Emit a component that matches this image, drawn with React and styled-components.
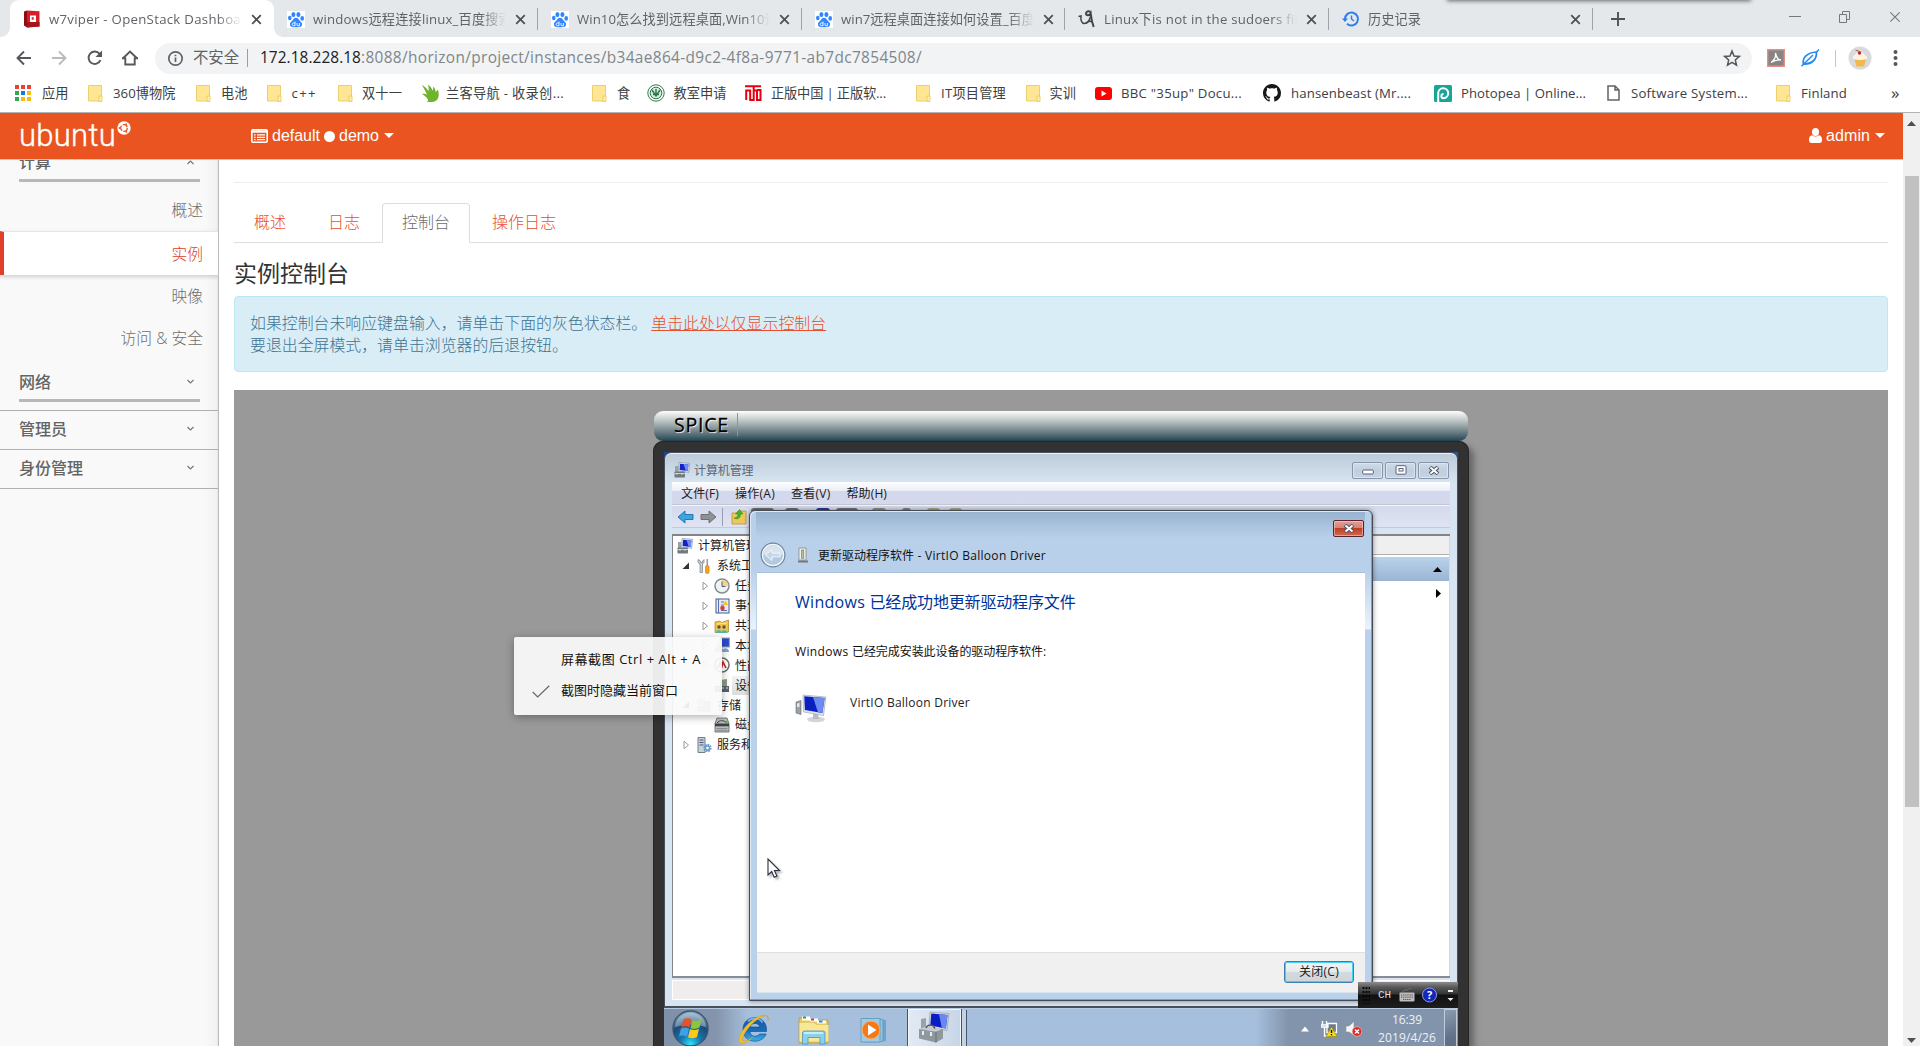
import React, { useLayoutEffect, useRef, useState } from "react";
import styled, { createGlobalStyle, css } from "styled-components";

const UI = `"Open Sans", "Noto Sans CJK SC", sans-serif`;
const ARIAL = `"Liberation Sans", "Noto Sans CJK SC", sans-serif`;

const Global = createGlobalStyle`
  * { box-sizing: border-box; }
  body { margin: 0; background: #fff; font-family: ${UI}; overflow: hidden; }
  svg { display: block; flex: none; }
`;

/* Text tracked so that it fills a given width. */
const FitSpan = styled.span`
  display: inline-block;
  white-space: pre;
`;
function Fit({ w, children }) {
  const ref = useRef(null);
  const [spacing, setSpacing] = useState(0);
  useLayoutEffect(() => {
    const natural = ref.current.getBoundingClientRect().width;
    setSpacing((w - natural) / String(children).length);
  }, [w, children]);
  return (
    <FitSpan ref={ref} style={{ letterSpacing: `${spacing}px` }}>
      {children}
    </FitSpan>
  );
}

/* ---------- browser chrome ---------- */
const Browser = styled.div`
  position: relative;
  width: 1920px;
  height: 1046px;
  display: flex;
  flex-direction: column;
  overflow: hidden;
`;
const TabStrip = styled.div`
  height: 37px;
  flex: none;
  display: flex;
  padding-left: 10px;
  background: #e5e8eb;
`;
const BrowserTab = styled.div`
  width: ${(p) => p.$w || 264}px;
  height: 37px;
  display: flex;
  align-items: center;
  padding: 1px 0 0 13px;
  color: #5f6368;
  font-size: 13.2px;
  line-height: 20px;
  position: relative;
  ${(p) =>
    p.$active
      ? css`
          background: #fff;
          border-radius: 9px 9px 0 0;
          &::before, &::after {
            content: "";
            position: absolute;
            bottom: 0;
            width: 9px;
            height: 9px;
          }
          &::before { left: -9px; background: radial-gradient(circle at 0 0, transparent 8.5px, #fff 9px); }
          &::after { right: -9px; background: radial-gradient(circle at 100% 0, transparent 8.5px, #fff 9px); }
        `
      : css`
          &::after {
            content: "";
            position: absolute;
            right: 0;
            top: 8px;
            width: 1px;
            height: 22px;
            background: #a0a3a7;
          }
        `}
`;
const TabTitle = styled.div`
  width: 193px;
  margin: 0 9px 0 8px;
  overflow: hidden;
  white-space: nowrap;
  mask-image: linear-gradient(90deg, #000 87%, transparent 100%);
`;
const NewTab = styled.div`
  width: 50px;
  height: 37px;
  display: flex;
  align-items: center;
  justify-content: center;
`;
const WindowButtons = styled.div`
  margin-left: auto;
  display: flex;
  align-items: center;
  gap: 38px;
  height: 33px;
  padding-right: 19px;
`;
const EdgeShadow = styled.div`
  position: absolute;
  top: -8px;
  left: 1448px;
  width: 302px;
  height: 8px;
  box-shadow: 0 0 4px 1px rgba(60, 60, 65, 0.75);
`;
const Toolbar = styled.div`
  height: 42px;
  flex: none;
  display: flex;
  align-items: center;
  padding: 0 0 0 14px;
`;
const NavButtons = styled.div`
  display: flex;
  gap: 15.3px;
  width: 141px;
  flex: none;
`;
const Omnibox = styled.div`
  width: 1597px;
  flex: none;
  height: 31px;
  border-radius: 16px;
  background: #f1f3f4;
  display: flex;
  align-items: center;
  padding: 0 11px 0 12px;
  font-size: 15.4px;
  line-height: 22px;
  color: #80868b;
`;
const Insecure = styled.div`
  margin-left: 9px;
  padding-right: 8px;
  color: #5f6368;
  border-right: 1px solid #9a9da1;
  margin-right: 12px;
  height: 18px;
  line-height: 18px;
`;
const Url = styled.div`
  flex: 1;
  white-space: nowrap;
  b { font-weight: 400; color: #202124; }
`;
const Extensions = styled.div`
  display: flex;
  align-items: center;
  margin-left: 15px;
`;
const ExtDivider = styled.div`
  width: 1px;
  height: 17px;
  background: #c4c7ca;
  margin: 0 12px 0 16px;
`;
const BookmarkBar = styled.div`
  height: 34px;
  flex: none;
  display: flex;
  align-items: center;
  padding: 0 0 5px 15px;
  border-bottom: 1px solid #b3b3b5;
`;
const BookmarkItem = styled.div`
  width: ${(p) => p.$w}px;
  flex: none;
  display: flex;
  align-items: center;
  font-size: 13.2px;
  line-height: 18px;
  color: #3c4043;
  white-space: nowrap;
`;
const BookmarkIcon = styled.div`
  width: ${(p) => p.$w}px;
  flex: none;
`;
const Overflow = styled(BookmarkItem)`
  font-size: 17px;
  padding-left: 2px;
`;

/* ---------- horizon page ---------- */
const Page = styled.div`
  flex: 1;
  min-height: 0;
  display: flex;
`;
const Horizon = styled.div`
  width: 1903px;
  display: flex;
  flex-direction: column;
`;
const TopBar = styled.div`
  height: 47px;
  flex: none;
  background: #e95420;
  border-bottom: 1px solid #d9c4bc;
  display: flex;
  align-items: center;
  padding: 0 18px 0 19px;
  color: #fff;
  font-family: ${ARIAL};
  font-size: 16px;
`;
const Logo = styled.div`
  width: 232px;
  height: 46px;
  display: flex;
  font-family: Roboto, sans-serif;
  font-size: 31px;
  font-weight: 300;
  line-height: 45px;
  -webkit-text-stroke: 0.4px #fff;
  svg { margin: 8px 0 0 1px; }
`;
const Project = styled.div`
  display: flex;
  align-items: center;
  padding-bottom: 1px;
`;
const Dot = styled.i`
  width: 11px;
  height: 11px;
  border-radius: 50%;
  background: #fff;
  margin: 2px 4px 0;
`;
const Caret = styled.i`
  border: 5.5px solid transparent;
  border-top-color: #fff;
  border-bottom: 0;
  margin-left: 5px;
`;
const User = styled(Project)`
  margin-left: auto;
  gap: 4px;
  ${Caret} { margin-left: 1px; }
`;
const Body = styled.div`
  flex: 1;
  min-height: 0;
  display: flex;
`;
const Sidebar = styled.div`
  width: 219px;
  flex: none;
  background: linear-gradient(90deg, #f9f9f9 205px, #f2f2f2 216px, #e8e8e8);
  border-right: 1px solid #bbb;
  overflow: hidden;
  color: #646464;
  font-size: 16px;
`;
const PanelGroup = styled.div`
  height: ${(p) => p.$h}px;
  margin: ${(p) => p.$m || "0"};
  padding: 0 21px ${(p) => (p.$ruled ? 0 : 2)}px ${(p) => (p.$ruled ? 0 : 19)}px;
  border-bottom: ${(p) => (p.$ruled ? "3px solid #b8b8b8" : "1px solid #b0b0b0")};
  display: flex;
  align-items: center;
  justify-content: space-between;
  line-height: 20px;
  font-weight: 500;
  svg { margin-right: ${(p) => (p.$ruled ? -16 : 2)}px; }
`;
const PanelLink = styled.div`
  height: 42px;
  display: flex;
  align-items: center;
  justify-content: flex-end;
  padding: 0 15px 1px 0;
  font-size: 15.75px;
  color: #6e6e6e;
  font-weight: 300;
  ${(p) =>
    p.$active &&
    css`
      height: 44px;
      margin-right: -1px;
      padding-right: 16px;
      background: #fff;
      color: #dd3f24;
      border-left: 4px solid #e0402a;
      border-top: 1px solid #e6e6e6;
      box-shadow: 0 2px 4px rgba(0, 0, 0, 0.17);
    `}
`;
const Main = styled.div`
  flex: 1;
  min-width: 0;
  padding: 22px 15px 0 15px;
  display: flex;
  flex-direction: column;
`;
const PageTabs = styled.div`
  flex: none;
  height: 61px;
  border-top: 1px solid #eee;
  border-bottom: 1px solid #ddd;
  display: flex;
  align-items: flex-end;
  gap: 2px;
`;
const PageTab = styled.div`
  height: 40px;
  padding: 0 19px;
  border: 1px solid ${(p) => (p.$active ? "#ddd" : "transparent")};
  border-bottom-color: ${(p) => (p.$active ? "#fff" : "transparent")};
  border-radius: 4px 4px 0 0;
  margin-bottom: -1px;
  font-size: 16px;
  font-weight: 300;
  line-height: 37px;
  color: ${(p) => (p.$active ? "#6c6c6c" : "#e84f2c")};
`;
const Heading = styled.h3`
  margin: 15px 0 8px;
  height: 30px;
  font-size: 23px;
  line-height: 30px;
  font-weight: 400;
  color: #333;
`;
const Alert = styled.div`
  height: 76px;
  flex: none;
  padding: 15px;
  background: #d9edf7;
  border: 1px solid #bce8f1;
  border-radius: 4px;
  color: #3d7391;
  font-size: 15.9px;
  font-weight: 300;
  line-height: 22px;
  a { color: #e84f2c; text-decoration: underline; margin-left: 4px; }
`;
const ConsoleArea = styled.div`
  flex: 1;
  min-height: 0;
  margin-top: 18px;
  padding: 21px 0 0 419px;
  background: #999;
  overflow: hidden;
`;
const SpiceBar = styled.div`
  width: 814px;
  height: 30px;
  margin: 0 0 0 1px;
  border-radius: 9px;
  background: linear-gradient(#fdfdfd 0, #c3caca 30%, #8d9b9f 55%, #2b4b57 97%, #1d3b47 100%);
  display: flex;
  align-items: center;
`;
const SpiceName = styled.div`
  width: 84px;
  height: 23px;
  padding-left: 20px;
  margin-top: -4px;
  border-right: 1px solid #8a9698;
  font-family: "Open Sans", sans-serif;
  font-size: 19.5px;
  line-height: 23px;
  color: #000;
  -webkit-text-stroke: 0.3px #000;
  text-shadow: 1px 1px 1px #fff;
`;
const SpiceFrame = styled.div`
  width: 816px;
  height: 640px;
  padding: 11px 11px 0 11px;
  background: #323232;
  border-radius: 10px;
  box-shadow: 5px 5px 6px rgba(60, 60, 60, 0.55), inset 0 0 0 1px #262626;
`;
/* The remote desktop: windows lie freely on it. */
const Desktop = styled.div`
  position: relative;
  width: 794px;
  height: 610px;
  background: linear-gradient(90deg, #1746a0, #1a5c9f);
  overflow: hidden;
  font-size: 12px;
  color: #1a1a1a;
`;

/* management console window */
const MmcWindow = styled.div`
  position: absolute;
  left: 0;
  top: 0;
  width: 794px;
  height: 556px;
  border: 1px solid #4a5059;
  border-bottom-width: 2px;
  border-radius: 7px 7px 0 0;
  background: linear-gradient(#bccad9 0, #d7e4f1 30px);
  padding: 0 7px 6px 7px;
  display: flex;
  flex-direction: column;
  box-shadow: inset 0 1px 0 #eef4fa;
`;
const MmcTitle = styled.div`
  height: 29px;
  flex: none;
  display: flex;
  align-items: center;
  padding: 5px 1px 0 2px;
  gap: 4px;
  color: #5b6670;
`;
const CaptionButtons = styled.div`
  margin-left: auto;
  display: flex;
  gap: 2px;
`;
const CaptionButton = styled.div`
  width: 31px;
  height: 17px;
  border: 1px solid #8796ad;
  border-radius: 2px;
  background: linear-gradient(#cfdbe8, #c0cede 50%, #c5d3e3);
  box-shadow: inset 0 0 0 1px #dbe5f0;
  display: flex;
  align-items: center;
  justify-content: center;
`;
const MmcMenu = styled.div`
  height: 24px;
  flex: none;
  background: linear-gradient(#fff 0, #e9edf7 9px, #d3d8ec 9px, #d4d9ed 22px, #c4c7d0 22px, #c4c7d0 23px, #f3f5fa 23px);
  display: flex;
  padding: 0 0 0 9px;
  gap: 16px;
  line-height: 23px;
`;
const MmcTools = styled.div`
  height: 22px;
  flex: none;
  background: linear-gradient(#d4d9ed, #dfe3f3);
  border-bottom: 1px solid #c7cad3;
  display: flex;
  align-items: center;
  padding: 0 0 0 5px;
`;
const ToolSeparator = styled.i`
  width: 1px;
  height: 18px;
  background: #9a9dab;
  margin: 0 8px 0 5px;
`;
const ToolEdge = styled.i`
  align-self: flex-start;
  width: ${(p) => p.$w}px;
  height: 12px;
  margin: 2px 0 0 ${(p) => p.$gap}px;
  border-radius: 3px;
  background: ${(p) => p.$c};
`;
const MmcBody = styled.div`
  flex: 1;
  min-height: 0;
  display: flex;
  margin-top: 6px;
  border-top: 2px solid #858589;
  border-left: 1px solid #858589;
  border-bottom: 2px solid #8b8b93;
  background: #fff;
`;
const Tree = styled.div`
  width: 160px;
  overflow: hidden;
`;
const TreeRow = styled.div`
  height: 19.9px;
  display: flex;
  align-items: center;
  padding-left: ${(p) => p.$indent}px;
  white-space: nowrap;
  gap: 5px;
  line-height: 19px;
`;
const Twisty = styled.span`
  width: 9px;
  margin-right: ${(p) => p.$gap || 0}px;
  flex: none;
`;
const SelectedLabel = styled.span`
  background: linear-gradient(#f3f3f3, #dcdcdc);
  margin-left: -3px;
  padding: 0 30px 0 3px;
`;
const Actions = styled.div`
  width: 100px;
  margin-left: auto;
  border-right: 1px solid #d7d7da;
  display: flex;
  flex-direction: column;
`;
const ActionsHead = styled.div`
  height: 19px;
  background: #efefef;
  border-bottom: 1px solid #aeb0b0;
  margin-bottom: 2px;
`;
const ActionsGroup = styled.div`
  height: 24px;
  background: linear-gradient(#bad3ec, #9ab4d2);
  display: flex;
  align-items: center;
  justify-content: flex-end;
  padding-right: 7px;
`;
const ActionsRow = styled(ActionsGroup)`
  background: none;
  padding-right: 8px;
`;
const StatusBar = styled.div`
  height: 20px;
  margin-top: 2px;
  flex: none;
  background: #f0edec;
  border: 1px solid #fff;
`;

/* driver dialog */
const Dialog = styled.div`
  position: absolute;
  left: 85px;
  top: 58px;
  width: 624px;
  height: 491px;
  border: 1px solid #474c54;
  border-radius: 6px 6px 0 0;
  background:
    linear-gradient(#b9d0ea 60px, #eaf3fc 118px, #b9d1ea 119px) 0 0 / 6px 100% no-repeat,
    linear-gradient(#b9d0ea 60px, #eaf3fc 118px, #b9d1ea 119px) 100% 0 / 7px 100% no-repeat,
    linear-gradient(#97b2cf 0, #b9d0ea 27px, #b9d1ea);
  box-shadow: inset -1px -1px 0 #36c1d2, inset 1px 1px 0 #dfeaf5, 0 0 5px rgba(0, 0, 0, 0.45);
  padding: 0 7px 7px 7px;
  display: flex;
  flex-direction: column;
`;
const DialogCaption = styled.div`
  height: 28px;
  flex: none;
  padding: 9px 1px 0 0;
  display: flex;
  justify-content: flex-end;
`;
const RedClose = styled.div`
  width: 31px;
  height: 17px;
  border: 1px solid #5b2330;
  border-radius: 2px;
  background: linear-gradient(#e0a096 0, #d88072 48%, #bd3f28 50%, #d26a50 100%);
  box-shadow: inset 0 0 0 1px rgba(255, 220, 210, 0.5);
  display: flex;
  align-items: center;
  justify-content: center;
`;
const DialogTitle = styled.div`
  height: 33px;
  flex: none;
  display: flex;
  align-items: center;
  padding: 0 0 1px 3px;
  color: #111;
  svg + svg { margin: 0 9px 0 11px; }
`;
const DialogBody = styled.div`
  flex: 1;
  background: #fff;
  border-top: 1px solid #a9c1dc;
  padding: 17px 0 0 38px;
`;
const DialogHeading = styled.div`
  font-size: 16px;
  line-height: 24px;
  color: #003399;
  margin-bottom: 28px;
`;
const DialogText = styled.div`
  line-height: 20px;
  color: #111;
`;
const Device = styled.div`
  display: flex;
  gap: 23px;
  margin-top: 32px;
  line-height: 18px;
  color: #222;
`;
const DialogFooter = styled.div`
  height: 41px;
  flex: none;
  background: #f0f0f0;
  border-top: 1px solid #dfdfdf;
  border-bottom: 1px solid #d9e4ef;
  display: flex;
  justify-content: flex-end;
  padding: 8px 11px 0 0;
`;
const CloseButton = styled.div`
  width: 70px;
  height: 22px;
  border: 1px solid #3c7fb1;
  border-radius: 3px;
  box-shadow: inset 0 0 0 1px #46d0f3;
  background: linear-gradient(#f2f5f6, #e5eaec 50%, #d3dadd 52%, #cfd5d8);
  text-align: center;
  line-height: 19px;
`;
const Cursor = styled.div`
  position: absolute;
  left: 103px;
  top: 406px;
  filter: drop-shadow(2px 2px 1px rgba(0, 0, 0, 0.3));
`;

/* language bar + taskbar */
const LangBar = styled.div`
  position: absolute;
  left: 694px;
  top: 530px;
  width: 100px;
  height: 26px;
  background: linear-gradient(#8d8d8d 0, #5a5a5a 5px, #333 12px, #111 13px, #1d1d1d);
  display: flex;
  align-items: center;
  padding: 0 4px 0 4px;
  color: #ddd;
  font: 11px/14px "Liberation Mono", monospace;
`;
const Grip = styled.i`
  width: 8px;
  height: 18px;
  margin-right: 8px;
  background: radial-gradient(circle, #060606 1px, transparent 1.2px) 0 0 / 3px 4px;
`;
const LangCode = styled.span`
  width: 21px;
`;
const LangRight = styled.span`
  margin-left: auto;
`;
const Taskbar = styled.div`
  position: absolute;
  left: 0;
  top: 556px;
  width: 794px;
  height: 50px;
  padding-left: 8px;
  border-top: 1px solid #b6cae2;
  background: linear-gradient(90deg, #7f90a8 0, #8394ac 52px, #a6bfdc 84px, #a6bfdc 592px, #8294ab 624px);
  display: flex;
`;
const TaskSlot = styled.div`
  width: ${(p) => p.$w}px;
  padding-top: ${(p) => p.$top || 0}px;
`;
const ActiveTask = styled.div`
  width: 55px;
  height: 50px;
  border: 1px solid #47536a;
  border-top: 0;
  background: linear-gradient(90deg, #e3ebf4, #c6d5e7);
  box-shadow: inset 0 0 0 1px #f2f6fb, 5px 0 0 -1px #c3d3e6, 6px 0 0 -1px #47536a;
  padding: 2px 0 0 10px;
`;
const Tray = styled.div`
  margin-left: auto;
  display: flex;
  color: #edf1f6;
`;
const TrayIcons = styled.div`
  display: flex;
  gap: 8px;
  padding-top: 12px;
  align-items: center;
  height: 28px;
`;
const Clock = styled.div`
  width: 74px;
  padding-top: 2px;
  margin-left: 8px;
  text-align: center;
  line-height: 18px;
  white-space: nowrap;
`;
const ShowDesktop = styled.div`
  width: 13px;
  margin: 0 1px 0 0;
  border: 1px solid #c1ccd9;
  background: linear-gradient(160deg, #8b9bb0, #5f7087 60%);
`;

/* screenshot tool menu */
const Popup = styled.div`
  position: absolute;
  left: 514px;
  top: 637px;
  width: 208px;
  height: 78px;
  border-radius: 2px;
  background: rgba(250, 250, 250, 0.93);
  box-shadow: 0 2px 9px rgba(0, 0, 0, 0.32);
  padding: 6px 0 0 18px;
  font-size: 13px;
  color: #111;
`;
const PopupRow = styled.div`
  height: 31.5px;
  display: flex;
  align-items: center;
  line-height: 18px;
`;
const CheckSlot = styled.span`
  width: 29px;
  padding-top: 3px;
`;

/* scrollbar */
const Scrollbar = styled.div`
  width: 17px;
  background: #f0f0f0;
  display: flex;
  flex-direction: column;
  align-items: center;
  padding: 8px 0 3px;
`;
const Thumb = styled.div`
  width: 14px;
  height: 631px;
  background: #c1c1c1;
  margin: 50px 0 auto;
`;

/* ---------- drawings ---------- */
const CloseX = ({ s = 11, c = "#4a4d51", w = 1.7 }) => (
  <svg width={s} height={s} viewBox="0 0 11 11">
    <path d="M1.2 1.2L9.8 9.8M9.8 1.2L1.2 9.8" stroke={c} strokeWidth={w} />
  </svg>
);
const Paw = () => (
  <svg width="18" height="17" viewBox="0 0 18 17">
    <rect width="18" height="17" fill="#fff" />
    <g fill="#3385ff">
      <ellipse cx="6.4" cy="3.4" rx="2" ry="2.5" />
      <ellipse cx="11.4" cy="3.4" rx="2" ry="2.5" />
      <ellipse cx="2.8" cy="7" rx="1.8" ry="2.3" />
      <ellipse cx="15.2" cy="7.4" rx="1.8" ry="2.3" />
      <path d="M9 6.8c1.7 0 2.4 1.4 3.6 2.7s2.9 2.3 2.4 4.6c-.5 2.5-3 2.3-6 2.1-3 .2-5.5.4-6-2.1-.5-2.3 1.2-3.3 2.4-4.6S7.3 6.8 9 6.8z" />
    </g>
    <path d="M8 10.5v4.300H6.6a1.300 1.300 0 0 1 0-2.800H8M10 12v1.900q0 .9 1 .9h1.400V12" stroke="#fff" strokeWidth=".9" fill="none" />
  </svg>
);
const OpenStack = () => (
  <svg width="18" height="18" viewBox="0 0 18 18">
    <path d="M1 1.5l3-1v17l-3-2z" fill="#8f0d12" />
    <path d="M4 .5l12.500.7v15.300L4 17.500z" fill="#d5202a" />
    <path d="M4 12h12.500v4.500L4 17.500z" fill="#a5141b" />
    <path d="M7 5.500h6v6.500H7z" fill="#fff" />
    <path d="M8.700 7.200h2v2.500h-2z" fill="#d5202a" />
  </svg>
);
const Sketch = () => (
  <svg width="18" height="18" viewBox="0 0 18 18" fill="none" stroke="#444">
    <path d="M.5 6.500l2.500-.5c-.5 4 .5 7.500 3.500 7.500 3.200 0 5-3 6-7" strokeWidth="1.500" />
    <path d="M12.500 2c-2-1.500-4.500-.5-4.500 1.500s3.500 2.500 4.700 0c.5 4.500 1 8.500 3 13.500" strokeWidth="2" />
    <path d="M8 13.500c2-2.500 4.500-2.500 6.500-1.500" strokeWidth="1.500" />
  </svg>
);
const History = () => (
  <svg width="18" height="18" viewBox="0 0 18 18" fill="none" stroke="#2f7de9" strokeWidth="2">
    <path d="M3 9a6.500 6.500 0 1 1 2 4.700" />
    <path d="M9.500 5.500V9l2.500 2" strokeWidth="1.500" />
    <path d="M0 8.500h6L3 12z" fill="#2f7de9" stroke="none" />
  </svg>
);
const NavIcon = ({ kind }) => (
  <svg width="20" height="20" viewBox="0 0 20 20" fill="none" stroke={kind === "forward" ? "#b9bcbf" : "#54575b"} strokeWidth="1.900">
    {kind === "back" && <path d="M17 10H4M10 3.500L3.500 10l6.500 6.500" />}
    {kind === "forward" && <path d="M3 10h13M10 3.500l6.500 6.500-6.500 6.500" />}
    {kind === "reload" && (
      <>
        <path d="M15.500 12.200A6.200 6.200 0 1 1 14.600 5.800" />
        <path d="M17 2.500v6.500h-6.500z" fill="#54575b" stroke="none" />
      </>
    )}
    {kind === "home" && <path d="M2.800 10.500L10 3.500l7.200 7M2 10.300h3.300M14.700 10.300H18M5.300 9.500v7h9.400v-7" />}
  </svg>
);
const Folder = () => (
  <svg width="15" height="17" viewBox="0 0 15 17">
    <path d="M.5.500h13v15.500H.5z" fill="#ffe694" stroke="#ecd06f" />
    <path d="M11 11h3v5.500h-3z" fill="#ffeeb0" stroke="#e8c850" strokeWidth=".8" />
  </svg>
);
const AppsGrid = () => {
  const c = ["#ea4335", "#ea4335", "#ea4335", "#34a853", "#1a73e8", "#fbbc04", "#34a853", "#fbbc04", "#fbbc04"];
  return (
    <svg width="16" height="16" viewBox="0 0 16 16">
      {c.map((f, i) => (
        <rect key={i} x={(i % 3) * 6} y={Math.floor(i / 3) * 6} width="4" height="4" fill={f} />
      ))}
    </svg>
  );
};
const Flame = () => (
  <svg width="17" height="18" viewBox="0 0 17 18">
    <path d="M4 18c4 0 2-4.500-4-8 3-.5 4 0 5 1C4 7.500 2 5 0 1c3 1.500 5 4 6.500 6C7 5 6.500 3 6 .5c2 1.500 4 4 4.500 6 .8-1 .8-2 .7-4 2 2 2.500 4 2.300 5.500 1-.5 1.700-1.200 2.500-2.500C17.500 11 17 18 10 18z" fill="#6cb52d" />
  </svg>
);
const GreenSeal = () => (
  <svg width="18" height="18" viewBox="0 0 18 18" fill="none" stroke="#2c7a4b">
    <circle cx="9" cy="9" r="8.200" />
    <circle cx="9" cy="9" r="5.800" fill="#dcebe1" />
    <path d="M5 6l4 6 4-6M9 5v8M6 10.500h6" strokeWidth="1.500" />
  </svg>
);
const RedSeal = () => (
  <svg width="17" height="16" viewBox="0 0 17 16" fill="none" stroke="#e60012" strokeWidth="2">
    <path d="M0 1.200h16M1.200 15V5.500h4V15h3.500V1.500M8.500 5.500H12V15h3.500V5H12" />
  </svg>
);
const YouTube = () => (
  <svg width="17" height="13" viewBox="0 0 17 13">
    <rect width="17" height="13" rx="3" fill="#f00" />
    <path d="M6.500 3.500v6l5-3z" fill="#fff" />
  </svg>
);
const GitHub = () => (
  <svg width="18" height="18" viewBox="0 0 16 16">
    <path fill="#191717" d="M8 0C3.580 0 0 3.580 0 8c0 3.540 2.290 6.530 5.470 7.590.4.070.55-.17.55-.38 0-.19-.01-.82-.01-1.490-2.010.37-2.530-.49-2.690-.94-.09-.23-.48-.94-.82-1.130-.28-.15-.68-.52-.01-.53.63-.01 1.080.58 1.230.82.72 1.210 1.870.87 2.330.66.07-.52.28-.87.51-1.070-1.780-.2-3.640-.89-3.640-3.950 0-.87.31-1.590.82-2.150-.08-.2-.36-1.020.08-2.120 0 0 .67-.21 2.200.82.64-.18 1.320-.27 2-.27s1.360.09 2 .27c1.530-1.040 2.200-.82 2.200-.82.44 1.100.16 1.920.08 2.120.51.56.82 1.270.82 2.150 0 3.070-1.870 3.750-3.650 3.950.29.25.54.73.54 1.480 0 1.070-.01 1.930-.01 2.200 0 .21.15.46.55.38A8.010 8.010 0 0 0 16 8c0-4.420-3.580-8-8-8z" />
  </svg>
);
const Photopea = () => (
  <svg width="18" height="17" viewBox="0 0 18 17">
    <rect width="18" height="17" rx="1.500" fill="#18a497" />
    <path d="M4.200 17V8.500a5 5 0 1 1 5.300 4.800c-2.700 0-3-4 0-4.300" fill="none" stroke="#fff" strokeWidth="2" />
  </svg>
);
const FileIcon = () => (
  <svg width="14" height="16" viewBox="0 0 14 16" fill="none" stroke="#5f6368" strokeWidth="1.500">
    <path d="M1 1h7l4 4v10H1zM8 1v4h4" />
  </svg>
);
const Acrobat = () => (
  <svg width="18" height="18" viewBox="0 0 18 18">
    <rect x=".7" y=".7" width="16.600" height="16.600" fill="#858585" stroke="#e58f85" strokeWidth="1.400" />
    <path d="M4 13.500c3-2 5-6 4.500-9.500 1 5 3 7 5.500 7-4-.5-7 .5-10 2.500z" fill="none" stroke="#fff" strokeWidth="1.300" />
  </svg>
);
const Feather = () => (
  <svg width="18" height="18" viewBox="0 0 18 18" fill="none" stroke="#1e88f5" strokeWidth="1.700">
    <path d="M2.500 15C1 9 6 3.500 15.500 3 16 10.500 10.500 15.500 2.500 15z" />
    <path d="M.5 17.200L12 6M15.500 3L18 .6" strokeWidth="1.400" />
  </svg>
);
const Cupcake = () => (
  <svg width="24" height="24" viewBox="0 0 24 24">
    <circle cx="12" cy="12" r="11.500" fill="#d9dadc" />
    <path d="M6.500 13h11.500l-2 7.500H8.500z" fill="#f0b94c" />
    <path d="M5 13c-1-3 2-3.500 3-5.500 1.500-2 6-2 7.500 0 1 2 4.500 2.500 3.500 5.500q-7 2-14 0z" fill="#fff3e2" />
    <circle cx="11.500" cy="7" r="1.700" fill="#c4212c" />
    <path d="M11.500 5.500L7.500 4" stroke="#7a4a2a" strokeWidth=".8" />
  </svg>
);
const Chevron = ({ up }) => (
  <svg width="9" height="6" viewBox="0 0 9 6">
    <path d={up ? "M1.500 5l3-3 3 3" : "M1.500 1l3 3 3-3"} fill="none" stroke="#777" strokeWidth="1.200" />
  </svg>
);
const CircleOfFriends = () => (
  <svg width="14" height="14" viewBox="0 0 14 14">
    <circle cx="7" cy="7" r="6.700" fill="#fff" />
    <circle cx="7" cy="7" r="3.300" fill="none" stroke="#e95420" strokeWidth="1.300" strokeDasharray="5.600 1.300" />
    <g fill="#e95420">
      <circle cx="2.500" cy="7" r=".9" />
      <circle cx="9.300" cy="3.100" r=".9" />
      <circle cx="9.300" cy="10.900" r=".9" />
    </g>
  </svg>
);
const ListAlt = () => (
  <svg width="17" height="14" viewBox="0 0 17 14">
    <rect x=".8" y=".8" width="15.400" height="12.400" rx="1.200" fill="none" stroke="#fff" strokeWidth="1.600" />
    <path d="M1 2.500h15" stroke="#fff" strokeWidth="2.400" />
    <path d="M3 5.800h1.600M6 5.800h8M3 8.300h1.600M6 8.300h8M3 10.700h1.600M6 10.700h8" stroke="#fff" strokeWidth="1.200" />
  </svg>
);
const Person = () => (
  <svg width="13" height="15" viewBox="0 0 13 15" fill="#fff">
    <ellipse cx="6.500" cy="4" rx="3.500" ry="4" />
    <path d="M0 12c0-3 1-4.500 3.200-4.700 2 1.700 4.600 1.700 6.600 0C12 7.500 13 9 13 12c0 2-.8 3-2.500 3h-8C.8 15 0 14 0 12z" />
  </svg>
);
const Computer = ({ s = 16 }) => (
  <svg width={s} height={s} viewBox="0 0 16 16">
    <path d="M5 .5l10.500.8-.8 9L4.500 9z" fill="#e8ebee" stroke="#8d959c" strokeWidth=".7" />
    <path d="M6 1.700l8.400.7-.7 6.600L5.600 8z" fill="#1023c8" />
    <path d="M9.500 2l4.900.4-.7 6.600-2-.3z" fill="#6f8cf2" />
    <path d="M1 4h3v6H1z" fill="#9aa2a8" />
    <rect x=".5" y="9.500" width="10.500" height="6" rx=".8" fill="#717a80" />
    <path d="M.5 11.500h10.500M3 11v2M8 11v2" stroke="#dfe3e6" strokeWidth=".8" />
  </svg>
);
const Monitor = () => (
  <svg width="32" height="29" viewBox="0 0 32 29">
    <path d="M1 8l5-1.500v14L1 19z" fill="#9ba1a6" stroke="#63686c" strokeWidth=".6" />
    <path d="M2 9.500l2.500-.6v4L2 13z" fill="#e4e7e9" />
    <ellipse cx="21" cy="25.500" rx="9" ry="2.700" fill="#d2d5d9" />
    <path d="M18 20h5l1 5h-6z" fill="#b7bcc1" />
    <path d="M8 1l23 2-2.500 18.500L8.500 18z" fill="#dfe2e8" stroke="#9aa0a8" strokeWidth=".6" />
    <path d="M9.300 2.300L29.600 4l-2.200 15-17.500-3z" fill="#0a1fc0" />
    <path d="M18 3l11.600 1-2.200 15-4.500-.8z" fill="#6d8cf3" />
  </svg>
);
const TreeIcon = ({ kind }) => (
  <svg width="16" height="16" viewBox="0 0 16 16">
    {kind === "tools" && (
      <>
        <path d="M2 1.500v3l2 1.500v8.500h2.500V6l1.500-1.500v-3L6.500 3v1.500h-2V3z" fill="#c9cdd0" stroke="#777d82" strokeWidth=".7" />
        <path d="M10.500 1h1.500v7h-1.500z" fill="#999" />
        <rect x="9.500" y="7.500" width="3.600" height="8" rx="1.500" fill="#f4a51c" stroke="#b26d08" strokeWidth=".5" />
      </>
    )}
    {kind === "clock" && (
      <>
        <circle cx="8" cy="8" r="7" fill="#eef3f8" stroke="#858b91" strokeWidth="1.500" />
        <path d="M8 8V1.800A6.200 6.200 0 0 1 14.200 8z" fill="#f5d489" />
        <path d="M8 3.500V8.500h3.500" stroke="#46607d" fill="none" />
      </>
    )}
    {kind === "event" && (
      <>
        <rect x="2" y="1" width="13" height="14" fill="#e5ebf6" stroke="#4c5c86" />
        <path d="M4.500 1v14M7 4h3M7 7h3M7 10h3M7 12.500h6" stroke="#5670b5" />
        <path d="M11.500 2.500l2.500 4.500H9z" fill="#f6c21a" />
        <circle cx="8.500" cy="10" r="2.300" fill="#d6403a" />
      </>
    )}
    {kind === "share" && (
      <>
        <path d="M1 4l5-1 1.500 1.500L14.500 2v12L1 14.500z" fill="#edc34d" stroke="#ad8320" strokeWidth=".7" />
        <path d="M3 6l10-1" stroke="#f9e7a8" />
        <circle cx="5" cy="9" r="1.700" fill="#6a5132" />
        <circle cx="10" cy="9" r="1.700" fill="#6a5132" />
        <path d="M2 15c0-4 5.500-4 6 0zM7.500 15c0-4 5.500-4 6 0z" fill="#54b6a2" />
      </>
    )}
    {kind === "users" && (
      <>
        <path d="M6 1h9.500v9H6z" fill="#2a49d0" stroke="#9aa" strokeWidth="1.200" />
        <circle cx="5" cy="7" r="2.500" fill="#dfae7c" />
        <path d="M.500 15c0-7 9-7 9 0z" fill="#c9a97a" />
        <path d="M8 15c0-5 7-5 7 0z" fill="#7ca6d7" />
      </>
    )}
    {kind === "perf" && (
      <>
        <circle cx="8" cy="8" r="7" fill="#fff" stroke="#6e6e6e" strokeWidth="1.500" />
        <path d="M4 11l2-5 2 3 1-4 3 6" stroke="#cf1f1f" strokeWidth="1.600" fill="none" />
      </>
    )}
    {kind === "device" && (
      <>
        <path d="M6 3l7-1v7H6z" fill="#8d9a8f" />
        <path d="M9 5l3-2v3z" fill="#4fc236" />
        <path d="M1 9h14v6H1z" fill="#5a6167" />
        <path d="M2 11h3M7 11h3M12 11h2" stroke="#e0e4e7" />
      </>
    )}
    {kind === "storage" && (
      <>
        <rect x="1" y="2" width="8" height="6" rx="1" fill="#b8c0c6" />
        <rect x="8" y="4" width="7" height="5" rx="1" fill="#6fb7dd" />
        <rect x="1" y="9" width="14" height="6" rx="1.500" fill="#a2a9af" />
      </>
    )}
    {kind === "disk" && (
      <>
        <path d="M3 1h10l2 5.500v8.500H1V6.500z" fill="#b9bcbe" stroke="#5c6063" strokeWidth=".8" />
        <path d="M1 6.500h14v2.800H1z" fill="#3f4346" />
        <path d="M3 6c2.500-3 7-3 9-.5" stroke="#444" fill="none" />
        <circle cx="12.500" cy="5" r="1.200" fill="#3bbf2a" />
        <path d="M2.500 11.500h11M2.500 13.300h11" stroke="#85898c" strokeWidth=".9" />
      </>
    )}
    {kind === "service" && (
      <>
        <path d="M2 .5h7v15H2z" fill="#c4d3da" stroke="#6f808a" />
        <path d="M3.500 3h4M3.500 5.500h4M3.500 8h4" stroke="#557" />
        <circle cx="11.500" cy="11" r="3" fill="none" stroke="#6d9bc9" strokeWidth="2.300" strokeDasharray="1.600 .7" />
        <circle cx="11.500" cy="11" r="2" fill="none" stroke="#6d9bc9" strokeWidth="1.300" />
      </>
    )}
  </svg>
);
const Triangle = ({ open }) => (
  <svg width="9" height="10" viewBox="0 0 9 10">
    {open ? <path d="M7 1.500V8H.500z" fill="#333" /> : <path d="M2 1.200v7.600L6.500 5z" fill="#fff" stroke="#999" />}
  </svg>
);
const ToolArrow = ({ c, e, flip }) => (
  <svg width="17" height="14" viewBox="0 0 17 14">
    <path transform={flip ? "matrix(-1 0 0 1 17 0)" : undefined} d="M1 7l7-6v3.500h8v5H8V13z" fill={c} stroke={e} strokeWidth=".9" />
  </svg>
);
const FolderUp = () => (
  <svg width="16" height="16" viewBox="0 0 16 16">
    <path d="M1 4h5l1.500-2H15v13H1z" fill="#efc85a" stroke="#bb9134" strokeWidth=".8" />
    <path d="M3 9c3 0 4-2 4-4H4.500L8.500.5l3.500 4.500H9.500C9.500 9 7 11 3 9z" fill="#42b629" stroke="#23811a" strokeWidth=".5" />
  </svg>
);
const GlyphX = () => (
  <svg width="12" height="9" viewBox="0 0 12 9">
    <path d="M2 1.200l8 6.600M10 1.200L2 7.800" stroke="#4d5468" strokeWidth="4" />
    <path d="M2.500 1.600l7 5.800M9.500 1.600l-7 5.800" stroke="#fff" strokeWidth="2" />
  </svg>
);
const BackOrb = () => (
  <svg width="26" height="26" viewBox="0 0 26 26">
    <circle cx="13" cy="13" r="11.800" fill="#b3c9e0" stroke="#71869c" strokeWidth="1.400" />
    <circle cx="13" cy="13" r="10.600" fill="none" stroke="#f0f6fb" strokeWidth="1.300" />
    <path d="M3 13a10 10 0 0 1 20 0q-10-3-20 0z" fill="#d7e3ef" />
    <path d="M5.500 13l6.500-5.500v3.700h8v3.600h-8v3.700z" fill="#c5d7e8" stroke="#f1f6fb" />
  </svg>
);
const DriverIcon = () => (
  <svg width="12" height="16" viewBox="0 0 12 16">
    <path d="M2 1h7v12H2z" fill="#f1f1f1" stroke="#888" strokeWidth=".8" />
    <rect x="4.300" y="3" width="2.500" height="8.500" fill="#a9c795" stroke="#778" strokeWidth=".6" />
    <path d="M1 13.500h10v2H1z" fill="#777" />
  </svg>
);
const StartOrb = () => (
  <svg width="37" height="37" viewBox="0 0 37 37">
    <defs>
      <radialGradient id="orb" cx=".5" cy=".95" r=".95">
        <stop offset="0" stopColor="#2fe2fb" />
        <stop offset=".3" stopColor="#167bb0" />
        <stop offset=".65" stopColor="#1c4a78" />
        <stop offset="1" stopColor="#9cb6cc" />
      </radialGradient>
    </defs>
    <circle cx="18.500" cy="18.500" r="17.500" fill="url(#orb)" stroke="#3b5573" strokeWidth="1.400" />
    <path d="M3 17C4 7 12 3 18.500 3S33 7 34 17q-15-5-31 0z" fill="#fff" opacity=".33" />
    <path d="M11.500 9.500q4-2.500 8 0l-2 8q-4-2.300-8-.3z" fill="#e8512a" />
    <path d="M20.500 10q4 2.300 9-.5l-2 8q-5 2.500-9 .5z" fill="#8cc63c" />
    <path d="M9 18.500q4-2 8 .2l-2 8q-4-2.500-8-.2z" fill="#3fa0e6" />
    <path d="M18 19q4.500 2.300 9-.3l-2 8.300q-4.500 2.300-9 .2z" fill="#fcc81e" />
  </svg>
);
const Explorer = () => (
  <svg width="32" height="30" viewBox="0 0 32 30">
    <path d="M1 3h10l2 2h17v23H1z" fill="#e7c863" stroke="#b99a3c" strokeWidth=".8" />
    <path d="M4 1.500h8v4H4z" fill="#fff" />
    <path d="M5 1.500h3v2H5z" fill="#2aa52a" />
    <path d="M12 3.500h8v3h-8z" fill="#fff" />
    <path d="M13 3.500h3v2h-3z" fill="#d5332a" />
    <path d="M19 5.500h9v3h-9z" fill="#fff" />
    <path d="M21 5.500h3.500v2H21z" fill="#2a86d5" />
    <path d="M1.500 8h14l3 2h12v16.500h-29z" fill="#f8e795" />
    <path d="M4.500 29V18q0-2 2-2h18.500q2 0 2 2v11h-5v-6.500h-12V29z" fill="#8bd0ec" stroke="#4796bd" strokeWidth=".8" />
    <path d="M6 18h19" stroke="#dff4fc" strokeWidth="1.500" />
  </svg>
);
const InternetExplorer = () => (
  <svg width="33" height="32" viewBox="0 0 33 32">
    <defs>
      <linearGradient id="ie" x1="0" y1="0" x2="0" y2="1">
        <stop offset="0" stopColor="#1d5ca6" />
        <stop offset=".5" stopColor="#1768b8" />
        <stop offset="1" stopColor="#36b3ea" />
      </linearGradient>
    </defs>
    <path d="M29.500 18.500H13c.3 5.500 7.300 6 9.500 2.500h6.600C25.500 31.500 6 31 6 16.500 6 .5 29.500 1 29.500 16.500zM13.100 14h9.700c-.8-4.600-8.700-4.800-9.700 0z" fill="url(#ie)" stroke="#10457f" strokeWidth=".6" />
    <path d="M11 8.500c4-4.500 11.500-3.500 14.500 1" stroke="#77bdf0" strokeWidth="1.500" fill="none" />
    <path d="M31 7.500C33.500-1 21 1 11 11S-.5 31.500 5 30.500c3.500-.5 8-3 12-7C9.500 28.500 4.500 29.300 5.200 26S12 12 20.500 6.500 31 2 31 7.500z" fill="#f3bd2c" stroke="#c8921a" strokeWidth=".4" />
  </svg>
);
const MediaPlayer = () => (
  <svg width="30" height="27" viewBox="0 0 30 27">
    <path d="M9 2l17 1v21l-17 1z" fill="#6da6c8" />
    <path d="M5 1.500l18 1v22l-18 .5z" fill="#8fc4df" stroke="#5794b7" strokeWidth=".7" />
    <path d="M1 1.500h19v23.500H1z" fill="#9dcbe4" stroke="#5b98bb" strokeWidth=".8" />
    <circle cx="11" cy="13" r="9" fill="#f27a1a" stroke="#fbb070" />
    <path d="M8 7.500v11l8.500-5.500z" fill="#fff" />
  </svg>
);
const Toolbox = () => (
  <svg width="32" height="32" viewBox="0 0 32 32">
    <path d="M12 1l19 1.500-2 17L11 16z" fill="#d5d9de" stroke="#8e949b" strokeWidth=".6" />
    <path d="M13.300 2.500L29.500 4l-1.700 13.500-15.500-3z" fill="#0a1dc4" />
    <path d="M21 3.300l8.500.7-1.700 13.500-4-.8z" fill="#6a88f2" />
    <path d="M3 8l5-1v12H3z" fill="#9aa1a7" />
    <path d="M1 18l17 2.500 7-3v10l-7 4-17-4z" fill="#8e989d" />
    <path d="M1 18l7-2.500 17 2-7 3z" fill="#c4cbce" />
    <path d="M18 20.500v11" stroke="#666f74" />
    <path d="M8 17q1-4 7-2.500l2 3" fill="none" stroke="#4f575c" strokeWidth="1.400" />
    <path d="M5 20v4M13 21v4" stroke="#e9ecee" strokeWidth="2" />
  </svg>
);
const NetworkTray = () => (
  <svg width="17" height="16" viewBox="0 0 17 16">
    <path d="M6 2.500h9.500v9H6z" fill="#6c7b8e" stroke="#fff" strokeWidth="1.300" />
    <path d="M1.500 0v4M5.500 0v4M0 4h7v2H0zM3.500 6v9h4" stroke="#fff" strokeWidth="1.400" fill="none" />
    <path d="M10.500 6l5.500 9.500H5z" fill="#f6dc1b" stroke="#a58e08" strokeWidth=".7" />
    <path d="M10.500 9v3M10.500 13v1.200" stroke="#111" strokeWidth="1.400" />
  </svg>
);
const SpeakerTray = () => (
  <svg width="16" height="16" viewBox="0 0 16 16">
    <path d="M0 5h3l5-4.500v14L3 11H0z" fill="#f4f6f8" stroke="#7d8794" strokeWidth=".5" />
    <circle cx="11" cy="10.500" r="4.800" fill="#da2a22" stroke="#f6b9b4" strokeWidth=".7" />
    <path d="M9 8.500l4 4M13 8.500l-4 4" stroke="#fff" strokeWidth="1.500" />
  </svg>
);

/* ---------- data ---------- */
const browserTabs = [
  { icon: <OpenStack />, title: "w7viper - OpenStack Dashboa", w: 192, active: true },
  { icon: <Paw />, title: "windows远程连接linux_百度搜索", w: 199 },
  { icon: <Paw />, title: "Win10怎么找到远程桌面,Win10远", w: 201 },
  { icon: <Paw />, title: "win7远程桌面连接如何设置_百度", w: 194, tabW: 263 },
  { icon: <Sketch />, title: "Linux下is not in the sudoers fil", w: 194 },
  { icon: <History />, title: "历史记录", w: 53 },
];
const bookmarks = [
  { w: 73, i: 27, icon: <AppsGrid />, t: "应用", tw: 26.5 },
  { w: 108, i: 25, icon: <Folder />, t: "360博物院", tw: 62.5 },
  { w: 71, i: 25, icon: <Folder />, t: "电池", tw: 26.5 },
  { w: 71, i: 24.5, icon: <Folder />, t: "c++", tw: 25.5 },
  { w: 84, i: 24, icon: <Folder />, t: "双十一", tw: 40 },
  { w: 170, i: 24, icon: <Flame />, t: "兰客导航 - 收录创...", tw: 118 },
  { w: 55, i: 25, icon: <Folder />, t: "食", tw: 13.2 },
  { w: 98, i: 26.5, icon: <GreenSeal />, t: "教室申请", tw: 53 },
  { w: 171, i: 26, icon: <RedSeal />, t: "正版中国 | 正版软...", tw: 115 },
  { w: 110, i: 25, icon: <Folder />, t: "IT项目管理", tw: 65 },
  { w: 69, i: 23.5, icon: <Folder />, t: "实训", tw: 26.5 },
  { w: 168, i: 26, icon: <YouTube />, t: 'BBC "35up" Docu...', tw: 121 },
  { w: 171, i: 28, icon: <GitHub />, t: "hansenbeast (Mr....", tw: 120 },
  { w: 173, i: 27, icon: <Photopea />, t: "Photopea | Online...", tw: 125 },
  { w: 169, i: 24, icon: <FileIcon />, t: "Software System...", tw: 117 },
  { w: 113, i: 25, icon: <Folder />, t: "Finland", tw: 46 },
];
const tree = [
  { indent: 4, icon: <Computer />, t: "计算机管理(本地)" },
  { indent: 9, tw: "open", icon: <TreeIcon kind="tools" />, t: "系统工具" },
  { indent: 28, tw: "shut", icon: <TreeIcon kind="clock" />, t: "任务计划程序" },
  { indent: 28, tw: "shut", icon: <TreeIcon kind="event" />, t: "事件查看器" },
  { indent: 28, tw: "shut", icon: <TreeIcon kind="share" />, t: "共享文件夹" },
  { indent: 28, tw: "shut", icon: <TreeIcon kind="users" />, t: "本地用户和组" },
  { indent: 28, tw: "shut", icon: <TreeIcon kind="perf" />, t: "性能" },
  { indent: 28, tw: "none", icon: <TreeIcon kind="device" />, t: "设备管理器", selected: true },
  { indent: 9, tw: "open", icon: <TreeIcon kind="storage" />, t: "存储" },
  { indent: 28, tw: "none", icon: <TreeIcon kind="disk" />, t: "磁盘管理" },
  { indent: 9, tw: "shut", icon: <TreeIcon kind="service" />, t: "服务和应用程序" },
];

function Chrome() {
  return (
    <>
      <TabStrip>
        {browserTabs.map((t) => (
          <BrowserTab key={t.title} $active={t.active} $w={t.tabW}>
            {t.icon}
            <TabTitle>
              <Fit w={t.w}>{t.title}</Fit>
            </TabTitle>
            <CloseX />
          </BrowserTab>
        ))}
        <NewTab>
          <svg width="14" height="14" viewBox="0 0 14 14">
            <path d="M7 0v14M0 7h14" stroke="#4f5256" strokeWidth="1.900" />
          </svg>
        </NewTab>
        <WindowButtons>
          <svg width="12" height="12" viewBox="0 0 12 12"><path d="M0 5.500h12" stroke="#777" /></svg>
          <svg width="12" height="12" viewBox="0 0 12 12" fill="none" stroke="#777">
            <path d="M.5 3.500h7v8h-7zM3.500 3V.5h7v8H8" />
          </svg>
          <CloseX s={12} c="#777" w={1} />
        </WindowButtons>
      </TabStrip>
      <EdgeShadow />
      <Toolbar>
        <NavButtons>
          <NavIcon kind="back" />
          <NavIcon kind="forward" />
          <NavIcon kind="reload" />
          <NavIcon kind="home" />
        </NavButtons>
        <Omnibox>
          <svg width="17" height="17" viewBox="0 0 17 17" fill="none" stroke="#5f6368" strokeWidth="1.700">
            <circle cx="8.500" cy="8.500" r="6.700" />
            <path d="M8.500 7.500v4.500M8.500 4.700v1.600" />
          </svg>
          <Insecure><Fit w={46}>不安全</Fit></Insecure>
          <Url>
            <b><Fit w={101}>172.18.228.18</Fit></b>
            <Fit w={561}>:8088/horizon/project/instances/b34ae864-d9c2-4f8a-9771-ab7dc7854508/</Fit>
          </Url>
          <svg width="18" height="18" viewBox="0 0 18 18">
            <path d="M9 2l2 5 5.300.4-4 3.500 1.200 5.200L9 13.300l-4.500 2.800 1.200-5.200-4-3.500L7 7z" fill="none" stroke="#54575b" strokeWidth="1.500" />
          </svg>
        </Omnibox>
        <Extensions>
          <Acrobat />
          <svg width="16" height="1" />
          <Feather />
          <ExtDivider />
          <Cupcake />
          <svg width="40" height="18" viewBox="0 0 40 18" fill="#54575b">
            <circle cx="23.500" cy="3" r="2" />
            <circle cx="23.500" cy="9" r="2" />
            <circle cx="23.500" cy="15" r="2" />
          </svg>
        </Extensions>
      </Toolbar>
      <BookmarkBar>
        {bookmarks.map((b) => (
          <BookmarkItem key={b.t} $w={b.w}>
            <BookmarkIcon $w={b.i}>{b.icon}</BookmarkIcon>
            <Fit w={b.tw}>{b.t}</Fit>
          </BookmarkItem>
        ))}
        <Overflow $w={14}>»</Overflow>
      </BookmarkBar>
    </>
  );
}

function RemoteDesktop() {
  return (
    <Desktop>
      <MmcWindow>
        <MmcTitle>
          <Computer />
          <Fit w={59.5}>计算机管理</Fit>
          <CaptionButtons>
            <CaptionButton>
              <svg width="12" height="10" viewBox="0 0 12 10"><rect x=".7" y="5" width="10.600" height="4" rx="1" fill="#fff" stroke="#596079" /></svg>
            </CaptionButton>
            <CaptionButton>
              <svg width="12" height="10" viewBox="0 0 12 10" fill="#fff" stroke="#596079">
                <rect x="1" y=".7" width="10" height="8.500" rx="1" />
                <rect x="4" y="3.500" width="4" height="2.500" />
              </svg>
            </CaptionButton>
            <CaptionButton><GlyphX /></CaptionButton>
          </CaptionButtons>
        </MmcTitle>
        <MmcMenu>
          <Fit w={38}>文件(F)</Fit>
          <Fit w={40}>操作(A)</Fit>
          <Fit w={39.5}>查看(V)</Fit>
          <Fit w={40.5}>帮助(H)</Fit>
        </MmcMenu>
        <MmcTools>
          <ToolArrow c="#3aa5e0" e="#1b6fb0" />
          <svg width="6" height="1" />
          <ToolArrow c="#8e9195" e="#66696d" flip />
          <ToolSeparator />
          <FolderUp />
          <ToolEdge $w={23} $gap={4} $c="#6d6f76" />
          <ToolEdge $w={14} $gap={11} $c="#6d6f76" />
          <ToolEdge $w={14} $gap={17} $c="#27389c" />
          <ToolEdge $w={22} $gap={6} $c="#6d6f76" />
          <ToolEdge $w={14} $gap={14} $c="#8e8a80" />
          <ToolEdge $w={9} $gap={16} $c="#7a7d84" />
          <ToolEdge $w={13} $gap={16} $c="#a8a37e" />
          <ToolEdge $w={13} $gap={9} $c="#a8a37e" />
        </MmcTools>
        <MmcBody>
          <Tree>
            {tree.map((r) => (
              <TreeRow key={r.t} $indent={r.indent}>
                {r.tw && (
                  <Twisty $gap={r.indent === 9 ? 0 : -1}>
                    {r.tw !== "none" && <Triangle open={r.tw === "open"} />}
                  </Twisty>
                )}
                {r.icon}
                {r.selected ? <SelectedLabel>{r.t}</SelectedLabel> : <span>{r.t}</span>}
              </TreeRow>
            ))}
          </Tree>
          <Actions>
            <ActionsHead />
            <ActionsGroup>
              <svg width="9" height="5" viewBox="0 0 9 5"><path d="M4.500 0L9 5H0z" /></svg>
            </ActionsGroup>
            <ActionsRow>
              <svg width="5" height="9" viewBox="0 0 5 9"><path d="M0 0l5 4.500L0 9z" /></svg>
            </ActionsRow>
          </Actions>
        </MmcBody>
        <StatusBar />
      </MmcWindow>

      <Dialog>
        <DialogCaption>
          <RedClose><GlyphX /></RedClose>
        </DialogCaption>
        <DialogTitle>
          <BackOrb />
          <DriverIcon />
          <Fit w={96}>更新驱动程序软件</Fit>
          <Fit w={132}> - VirtIO Balloon Driver</Fit>
        </DialogTitle>
        <DialogBody>
          <DialogHeading>
            <Fit w={74.5}>Windows </Fit>
            <Fit w={206}>已经成功地更新驱动程序文件</Fit>
          </DialogHeading>
          <DialogText>
            <Fit w={57}>Windows </Fit>
            <Fit w={194}>已经完成安装此设备的驱动程序软件:</Fit>
          </DialogText>
          <Device>
            <Monitor />
            <Fit w={120}>VirtIO Balloon Driver</Fit>
          </Device>
        </DialogBody>
        <DialogFooter>
          <CloseButton><Fit w={40}>关闭(C)</Fit></CloseButton>
        </DialogFooter>
      </Dialog>

      <Cursor>
        <svg width="15" height="21" viewBox="0 0 15 21">
          <path d="M1 1v16l3.700-3.500 2.500 5.700 2.700-1.200-2.500-5.500h5.100z" fill="#fff" stroke="#2b2f3c" strokeWidth="1.100" />
        </svg>
      </Cursor>

      <LangBar>
        <Grip />
        <LangCode>CH</LangCode>
        <svg width="16" height="14" viewBox="0 0 16 14">
          <path d="M4 4c0-3 4-1 5-2.500S13 1 12 0" fill="none" stroke="#777" />
          <rect x=".5" y="4.500" width="15" height="9" rx="1" fill="#bdbdbd" />
          <path d="M2 7h12M2 9.200h12M4 11.500h8" stroke="#555" strokeDasharray="1.300 .8" />
        </svg>
        <svg width="30" height="16" viewBox="0 0 30 16">
          <circle cx="14.500" cy="8" r="7" fill="#1426b8" stroke="#8a96e8" />
          <text x="14.500" y="12" fill="#fff" fontSize="11" fontWeight="700" textAnchor="middle" fontFamily="Open Sans">?</text>
        </svg>
        <LangRight>
          <svg width="7" height="16" viewBox="0 0 7 16" fill="#eee"><path d="M1 3h5v2H1zM.5 11h6L3.500 14z" /></svg>
        </LangRight>
      </LangBar>

      <Taskbar>
        <TaskSlot $w={65} $top={1}><StartOrb /></TaskSlot>
        <TaskSlot $w={61} $top={4}><InternetExplorer /></TaskSlot>
        <TaskSlot $w={62} $top={6}><Explorer /></TaskSlot>
        <TaskSlot $w={47} $top={8}><MediaPlayer /></TaskSlot>
        <ActiveTask><Toolbox /></ActiveTask>
        <Tray>
          <TrayIcons>
            <svg width="16" height="6" viewBox="0 0 16 6"><path d="M8 .5l4 5H4z" fill="#fff" /></svg>
            <NetworkTray />
            <SpeakerTray />
          </TrayIcons>
          <Clock>
            <Fit w={30}>16:39</Fit>
            <br />
            <Fit w={58}>2019/4/26</Fit>
          </Clock>
          <ShowDesktop />
        </Tray>
      </Taskbar>
    </Desktop>
  );
}

export default function App() {
  return (
    <Browser>
      <Global />
      <Chrome />
      <Page>
        <Horizon>
          <TopBar>
            <Logo>
              <Fit w={97}>ubuntu</Fit>
              <CircleOfFriends />
            </Logo>
            <Project>
              <ListAlt />
              <svg width="4" height="1" />
              <Fit w={48}>default</Fit>
              <Dot />
              <Fit w={40}>demo</Fit>
              <Caret />
            </Project>
            <User>
              <Person />
              <Fit w={44}>admin</Fit>
              <Caret />
            </User>
          </TopBar>
          <Body>
            <Sidebar>
              <PanelGroup $ruled $h={38} $m="-16px 18px 7px 19px">
                计算 <Chevron up />
              </PanelGroup>
              <PanelLink>概述</PanelLink>
              <PanelLink $active>实例</PanelLink>
              <PanelLink>映像</PanelLink>
              <PanelLink>访问 &amp; 安全</PanelLink>
              <PanelGroup $ruled $h={37} $m="6px 18px 0 19px">
                网络 <Chevron />
              </PanelGroup>
              <PanelGroup $h={9} />
              <PanelGroup $h={39}>
                管理员 <Chevron />
              </PanelGroup>
              <PanelGroup $h={39}>
                身份管理 <Chevron />
              </PanelGroup>
            </Sidebar>
            <Main>
              <PageTabs>
                <PageTab>概述</PageTab>
                <PageTab>日志</PageTab>
                <PageTab $active>控制台</PageTab>
                <PageTab>操作日志</PageTab>
              </PageTabs>
              <Heading>实例控制台</Heading>
              <Alert>
                如果控制台未响应键盘输入，请单击下面的灰色状态栏。
                <a>单击此处以仅显示控制台</a>
                <br />
                要退出全屏模式，请单击浏览器的后退按钮。
              </Alert>
              <ConsoleArea>
                <SpiceBar>
                  <SpiceName><Fit w={55}>SPICE</Fit></SpiceName>
                </SpiceBar>
                <SpiceFrame>
                  <RemoteDesktop />
                </SpiceFrame>
              </ConsoleArea>
            </Main>
          </Body>
        </Horizon>
        <Scrollbar>
          <svg width="9" height="5" viewBox="0 0 9 5"><path d="M4.500 0L9 5H0z" fill="#505050" /></svg>
          <Thumb />
          <svg width="9" height="5" viewBox="0 0 9 5"><path d="M4.500 5L9 0H0z" fill="#505050" /></svg>
        </Scrollbar>
      </Page>
      <Popup>
        <PopupRow>
          <CheckSlot />
          <Fit w={140}>屏幕截图 Ctrl + Alt + A</Fit>
        </PopupRow>
        <PopupRow>
          <CheckSlot>
            <svg width="18" height="13" viewBox="0 0 18 13"><path d="M.7 7l5 5L17.300.7" fill="none" stroke="#666" strokeWidth="1.200" /></svg>
          </CheckSlot>
          <Fit w={117}>截图时隐藏当前窗口</Fit>
        </PopupRow>
      </Popup>
    </Browser>
  );
}
